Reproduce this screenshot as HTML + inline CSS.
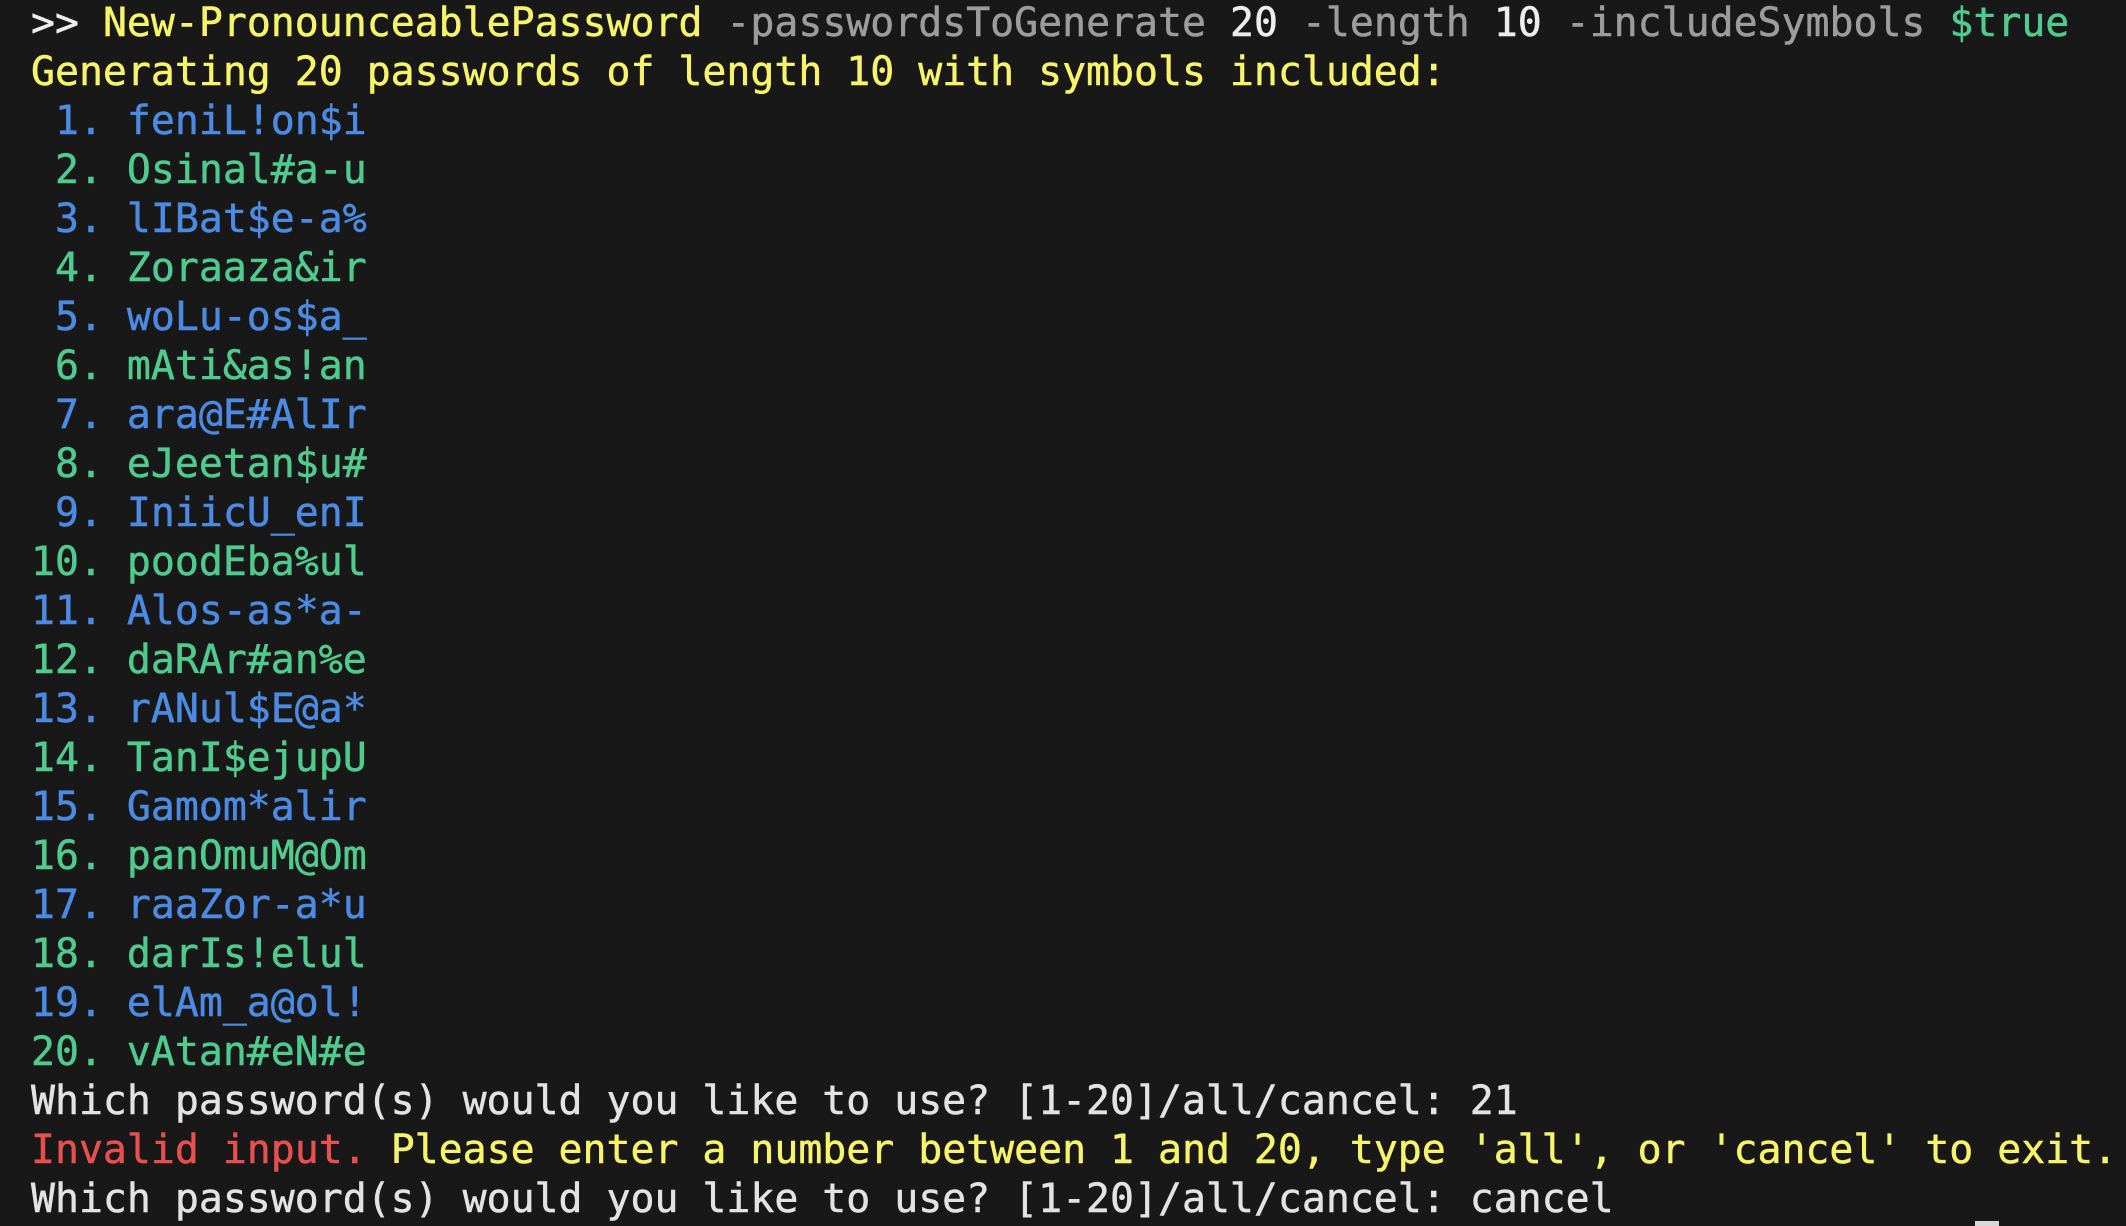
<!DOCTYPE html>
<html><head><meta charset="utf-8"><style>
html,body{margin:0;padding:0;background:#181818;width:2126px;height:1226px;overflow:hidden}
pre{position:absolute;top:-1px;left:0;margin:0;padding:0 0 0 31px;font-family:"DejaVu Sans Mono","Liberation Mono",monospace;font-size:39.85px;line-height:49px;color:#e3e3e3;white-space:pre;-webkit-text-stroke:0.5px currentColor}
.y{color:#f7f46a}.b{color:#4b8be3}.g{color:#4fcb8d}.p{color:#9c9c9c}.w{color:#ededed}.r{color:#e8504f}
#cur{position:absolute;left:1975px;top:1221px;width:24px;height:5px;background:#d8d8d8}
</style></head><body><pre><span class="w">&gt;&gt;</span> <span class="y">New-PronounceablePassword</span> <span class="p">-passwordsToGenerate</span> <span class="w">20</span> <span class="p">-length</span> <span class="w">10</span> <span class="p">-includeSymbols</span> <span class="g">$true</span>
<span class="y">Generating 20 passwords of length 10 with symbols included:</span>
<span class="b"> 1. feniL!on$i</span>
<span class="g"> 2. Osinal#a-u</span>
<span class="b"> 3. lIBat$e-a%</span>
<span class="g"> 4. Zoraaza&amp;ir</span>
<span class="b"> 5. woLu-os$a_</span>
<span class="g"> 6. mAti&amp;as!an</span>
<span class="b"> 7. ara@E#AlIr</span>
<span class="g"> 8. eJeetan$u#</span>
<span class="b"> 9. IniicU_enI</span>
<span class="g">10. poodEba%ul</span>
<span class="b">11. Alos-as*a-</span>
<span class="g">12. daRAr#an%e</span>
<span class="b">13. rANul$E@a*</span>
<span class="g">14. TanI$ejupU</span>
<span class="b">15. Gamom*alir</span>
<span class="g">16. panOmuM@Om</span>
<span class="b">17. raaZor-a*u</span>
<span class="g">18. darIs!elul</span>
<span class="b">19. elAm_a@ol!</span>
<span class="g">20. vAtan#eN#e</span>
Which password(s) would you like to use? [1-20]/all/cancel: 21
<span class="r">Invalid input.</span> <span class="y">Please enter a number between 1 and 20, type 'all', or 'cancel' to exit.</span>
Which password(s) would you like to use? [1-20]/all/cancel: cancel</pre><div id="cur"></div></body></html>
